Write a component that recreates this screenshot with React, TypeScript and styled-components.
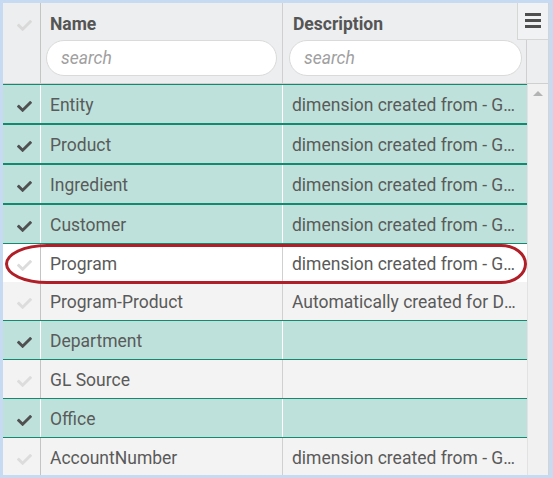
import styled, { createGlobalStyle } from "styled-components";
import { FaCheck } from "react-icons/fa";

const GlobalStyle = createGlobalStyle`
  html, body {
    margin: 0;
    padding: 0;
    background: #c6daf2;
  }
  * {
    box-sizing: border-box;
  }
`;

const rows = [
  { name: "Entity", desc: "dimension created from - GL Source", on: true },
  { name: "Product", desc: "dimension created from - GL Source", on: true },
  { name: "Ingredient", desc: "dimension created from - GL Source", on: true },
  { name: "Customer", desc: "dimension created from - GL Source", on: true },
  { name: "Program", desc: "dimension created from - GL Source", on: false, hover: true },
  { name: "Program-Product", desc: "Automatically created for Dimension", on: false },
  { name: "Department", desc: "", on: true },
  { name: "GL Source", desc: "", on: false },
  { name: "Office", desc: "", on: true },
  { name: "AccountNumber", desc: "dimension created from - GL Source", on: false },
];

const App = () => {
  return (
    <>
      <GlobalStyle />
      <Frame>
        <Grid>
          <Header>
            <HeadCheck>
              <FaCheck size={15} />
            </HeadCheck>
            <HeadCell>
              <HeadTitle>Name</HeadTitle>
              <Search placeholder="search" />
            </HeadCell>
            <HeadCell $wide>
              <HeadTitle>Description</HeadTitle>
              <Search placeholder="search" />
            </HeadCell>
            <HeadScroll />
          </Header>
          <Body>
            <Rows>
              {rows.map((r) => (
                <Row key={r.name} $on={r.on} $hover={r.hover}>
                  <CheckCell $on={r.on}>
                    <FaCheck size={15} />
                  </CheckCell>
                  <Cell $on={r.on}>{r.name}</Cell>
                  <Cell $on={r.on} $last>
                    {r.desc}
                  </Cell>
                </Row>
              ))}
            </Rows>
            <ScrollTrack>
              <ArrowUp />
            </ScrollTrack>
          </Body>
        </Grid>
        <MenuButton>
          <Bar />
          <Bar />
          <Bar />
        </MenuButton>
        <Highlight />
      </Frame>
    </>
  );
};

export default App;

const Frame = styled.div`
  position: relative;
  width: 553px;
  height: 478px;
  padding: 3px 4px 3px 3px;
  background: #c6daf2;
  font-family: Roboto, "Liberation Sans", sans-serif;
  color: #555;
`;

const Grid = styled.div`
  width: 546px;
  height: 472px;
  overflow: hidden;
  background: #f3f3f3;
  border-right: 1px solid #d4d4d4;
  display: flex;
  flex-direction: column;
`;

const Header = styled.div`
  display: grid;
  grid-template-columns: 38px 242px 244px 21px;
  height: 81px;
  background: #eceeef;
  border-bottom: 1px solid #cfcfcf;
  flex-shrink: 0;
`;

const HeadCheck = styled.div`
  border-right: 1px solid #c4c4c4;
  display: flex;
  align-items: flex-start;
  padding: 15px 0 0 14px;
  color: #d9d9d9;
`;

const HeadCell = styled.div<{ $wide?: boolean }>`
  display: flex;
  flex-direction: column;
  border-right: 1px solid #cfcfcf;
  padding: 0 ${(p) => (p.$wide ? "4px" : "5px")} 0 ${(p) => (p.$wide ? "6px" : "5px")};
`;

const HeadTitle = styled.div`
  height: 37px;
  display: flex;
  align-items: center;
  padding-left: 4px;
  padding-top: 4px;
  font-size: 17.5px;
  font-weight: 700;
  color: #555;
`;

const Search = styled.input`
  height: 36px;
  width: 100%;
  border: 1px solid #dadada;
  border-radius: 18px;
  background: #fff;
  padding: 0 14px;
  font-family: Roboto, "Liberation Sans", sans-serif;
  font-size: 17.5px;
  font-style: italic;
  color: #555;
  outline: none;

  &::placeholder {
    color: #a0a0a0;
  }
`;

const HeadScroll = styled.div`
  background: #eceeef;
`;

const Body = styled.div`
  display: flex;
  flex: 1;
  min-height: 0;
`;

const Rows = styled.div`
  width: 524px;
  display: flex;
  flex-direction: column;
`;

const Row = styled.div<{ $on: boolean; $hover?: boolean }>`
  display: grid;
  grid-template-columns: 38px 242px 244px;
  height: ${(p) => (p.$on ? "40px" : "38px")};
  flex-shrink: 0;
  background: ${(p) => (p.$on ? "#bee2db" : p.$hover ? "#ffffff" : "#f3f3f3")};
  border-top: ${(p) => (p.$on ? "1px solid #118a70" : "none")};
  border-bottom: ${(p) => (p.$on ? "1px solid #118a70" : "none")};
`;

const CheckCell = styled.div<{ $on: boolean }>`
  display: flex;
  align-items: center;
  padding: 4px 0 0 14px;
  color: ${(p) => (p.$on ? "#505050" : "#dcdcdc")};
  border-right: 1px solid ${(p) => (p.$on ? "#ffffff" : "#c4c4c4")};
`;

const Cell = styled.div<{ $on: boolean; $last?: boolean }>`
  display: block;
  padding: 2px 11px 0 9px;
  font-size: 17.5px;
  line-height: 36px;
  color: #5a5a5a;
  border-right: ${(p) => (p.$last ? "none" : `1px solid ${p.$on ? "#ffffff" : "#d0d0d0"}`)};
  overflow: hidden;
  white-space: nowrap;
  text-overflow: ellipsis;
  min-width: 0;
`;

const ScrollTrack = styled.div`
  width: 21px;
  background: #f1f1f1;
  border-left: 1px solid #e2e2e2;
  display: flex;
  justify-content: center;
  padding-top: 7px;
`;

const ArrowUp = styled.div`
  width: 0;
  height: 0;
  border-left: 5px solid transparent;
  border-right: 5px solid transparent;
  border-bottom: 5px solid #b3b3b3;
`;

const MenuButton = styled.div`
  position: absolute;
  top: 3px;
  left: 517px;
  width: 31px;
  height: 37px;
  background: #f0f2f3;
  border-left: 1px solid #d6d6d6;
  border-bottom: 1px solid #d6d6d6;
  display: flex;
  flex-direction: column;
  align-items: center;
  padding-top: 10px;
  gap: 3px;
`;

const Bar = styled.div`
  width: 16px;
  height: 3px;
  background: #4f4f4f;
`;

const Highlight = styled.div`
  position: absolute;
  left: 5px;
  top: 244px;
  width: 522px;
  height: 40px;
  border: 3.5px solid #b01f28;
  border-radius: 42px 26px 26px 42px / 20px 20px 20px 20px;
  pointer-events: none;
`;
